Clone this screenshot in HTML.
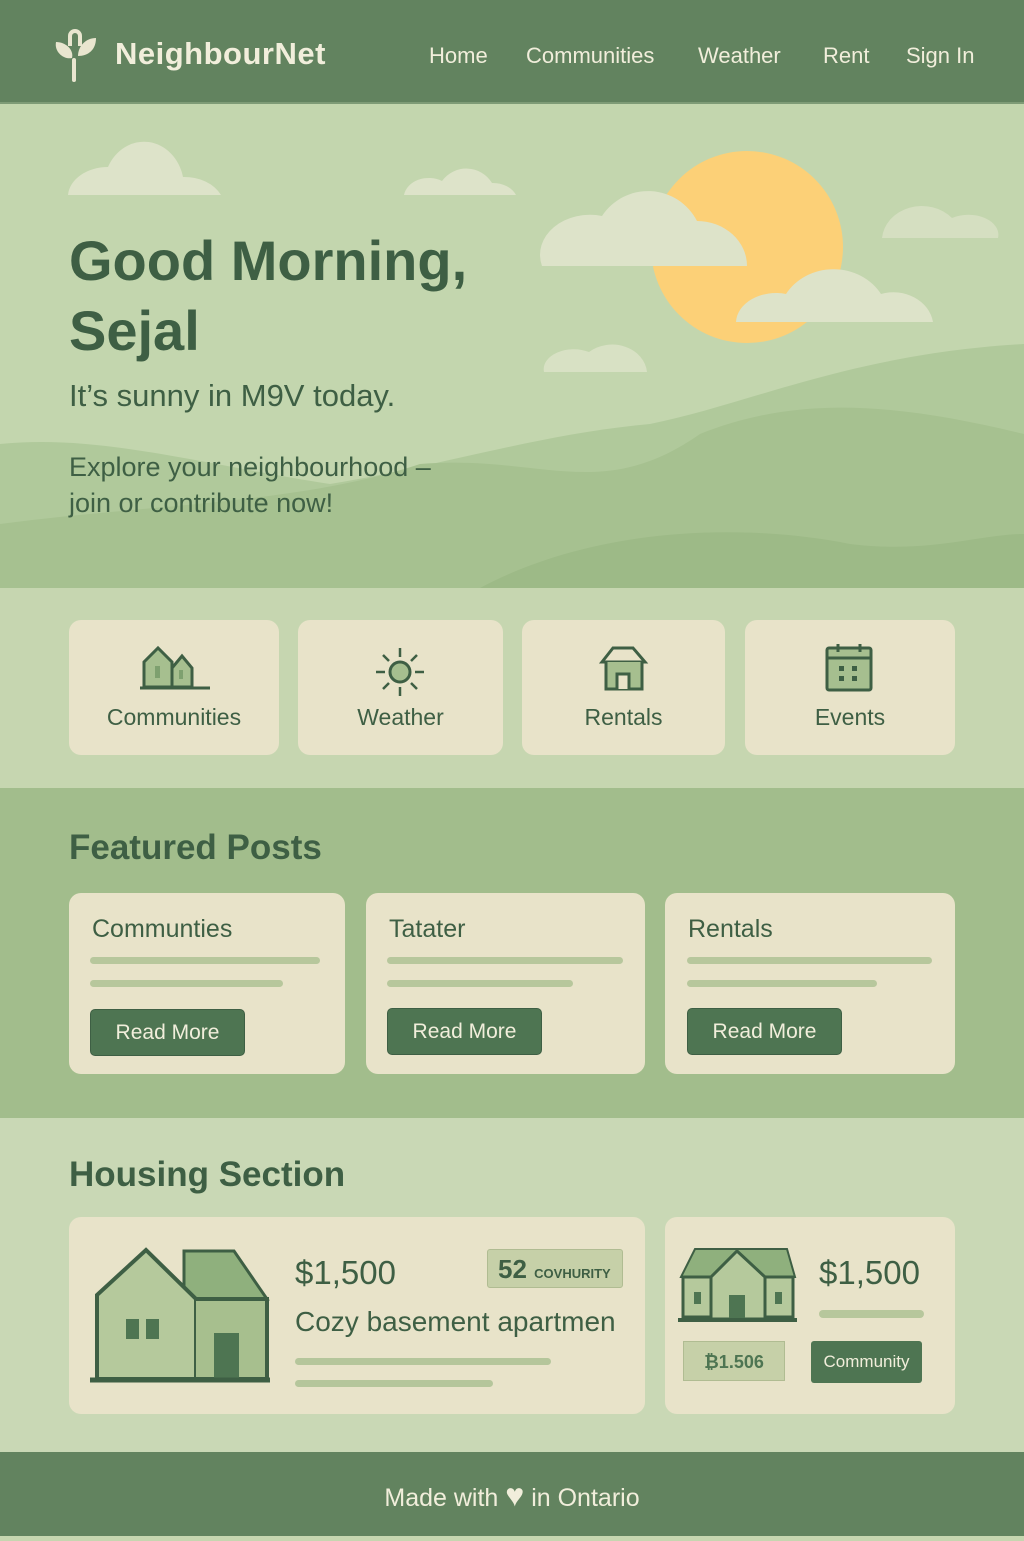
<!DOCTYPE html>
<html><head><meta charset="utf-8"><style>
*{margin:0;padding:0;box-sizing:border-box}
body{width:1024px;height:1536px;overflow:hidden;font-family:"Liberation Sans",sans-serif;background:#c6d6b0;color:#3e5f44;position:relative}
.abs{position:absolute}
header{position:absolute;left:0;top:0;width:1024px;height:104px;background:#62835f;border-bottom:2px solid #7e9b76}
.logo{position:absolute;left:115px;top:36px;font-size:31px;font-weight:bold;color:#f1eedb;letter-spacing:.5px}
nav a{position:absolute;top:43px;font-size:22px;color:#f1eedb;text-decoration:none}
.hero{position:absolute;left:0;top:104px;width:1024px;height:484px;background:#c3d6ae;overflow:hidden}
h1{position:absolute;left:69px;top:122px;font-size:56px;line-height:70px;color:#3e5f44;font-weight:bold}
.card{position:absolute;background:#e8e3c9;border-radius:12px}
.ic .lbl{position:absolute;left:0;right:0;top:84px;text-align:center;font-size:23px;color:#3e5f44}
.fp{font-size:25px;position:absolute;left:23px;top:22px}
.bar{position:absolute;height:7px;border-radius:4px;background:#b7c79c}
.btn{position:absolute;background:#4e7552;color:#f1eedb;border-radius:5px;font-size:21px;text-align:center;line-height:46px;width:155px;height:47px;border:1px solid #3e5f44}
h2{position:absolute;left:69px;font-size:35px;color:#3e5f44;font-weight:bold}
footer{position:absolute;left:0;top:1452px;width:1024px;height:84px;background:#62835f;color:#f1eedb;font-size:25px;text-align:center;line-height:86px}
</style></head><body>
<header>
<svg class="abs" style="left:52px;top:26px" width="48" height="56" viewBox="0 0 48 56"><path d="M18 20 V10 a5 5 0 0 1 10 0 V20" fill="none" stroke="#e9e6cf" stroke-width="4"/><path d="M22 54 V34" stroke="#e9e6cf" stroke-width="4" stroke-linecap="round"/><path d="M4 16 C14 16 22 24 20 32 C12 34 2 26 4 16Z" fill="#e9e6cf"/><path d="M44 12 C34 12 26 20 26 30 C36 30 44 24 44 12Z" fill="#e9e6cf"/></svg>
<div class="logo">NeighbourNet</div>
<nav><a style="left:429px">Home</a><a style="left:526px">Communities</a><a style="left:698px">Weather</a><a style="left:823px">Rent</a><a style="left:906px">Sign In</a></nav>
</header>
<div class="hero">
<svg class="abs" style="left:0;top:0" width="1024" height="484">
<circle cx="747" cy="143" r="96" fill="#fcd077"/>
<g fill="#dde3c9">
<path d="M68 91 a40 30 0 0 1 40 -28 a40 45 0 0 1 75 10 a40 30 0 0 1 38 18Z"/>
<path d="M404 91 a25 20 0 0 1 38 -14 a30 30 0 0 1 50 2 a25 20 0 0 1 24 12Z"/>
<path d="M542 162 a50 40 0 0 1 60 -50 a55 55 0 0 1 95 5 a50 45 0 0 1 50 45Z"/>
<path d="M736 218 a40 30 0 0 1 50 -28 a55 50 0 0 1 95 0 a40 35 0 0 1 52 28Z"/>
<path d="M544 268 a30 20 0 0 1 45 -20 a35 30 0 0 1 58 20Z" opacity=".8"/>
<path d="M882 134 a40 35 0 0 1 70 -20 a30 20 0 0 1 46 20Z" opacity=".7"/>
</g>
<path d="M0 340 C100 330 200 360 330 380 C450 360 540 330 650 320 C750 300 850 250 1024 240 V484 H0Z" fill="#b0c99b"/>
<path d="M0 420 C150 400 300 400 420 360 C540 350 600 400 700 330 C800 290 900 300 1024 330 V484 H0Z" fill="#a6c190"/>
<path d="M480 484 C600 420 750 420 850 440 C930 450 980 430 1024 430 V484Z" fill="#9dba87"/>
</svg>
<h1>Good Morning,<br>Sejal</h1>
<div class="abs" style="left:69px;top:274px;font-size:31px;color:#3e5f44">It’s sunny in M9V today.</div>
<div class="abs" style="left:69px;top:345px;font-size:27px;line-height:36px;color:#3e5f44">Explore your neighbourhood –<br>join or contribute now!</div>
</div>

<div class="card ic" style="left:69px;top:620px;width:210px;height:135px"><svg class="abs" style="left:69px;top:24px" width="74" height="46" viewBox="0 0 74 46"><path d="M6 43 V18 L20 4 L34 18 V43Z" fill="#a6bf8f" stroke="#3e5f44" stroke-width="3"/><path d="M34 43 V24 L44 12 L54 24 V43Z" fill="#a6bf8f" stroke="#3e5f44" stroke-width="3"/><rect x="17" y="22" width="5" height="12" fill="#7ea06f"/><rect x="41" y="26" width="4" height="9" fill="#7ea06f"/><path d="M2 44 H72" stroke="#3e5f44" stroke-width="3"/></svg><div class="lbl">Communities</div></div>
<div class="card ic" style="left:298px;top:620px;width:205px;height:135px"><svg class="abs" style="left:76px;top:26px" width="52" height="52" viewBox="0 0 52 52"><circle cx="26" cy="26" r="10" fill="#a6bf8f" stroke="#3e5f44" stroke-width="3"/><g stroke="#3e5f44" stroke-width="2.5"><path d="M26 2V11M26 41V50M2 26H11M41 26H50M9 9L15 15M37 37L43 43M43 9L37 15M15 37L9 43"/></g></svg><div class="lbl">Weather</div></div>
<div class="card ic" style="left:522px;top:620px;width:203px;height:135px"><svg class="abs" style="left:77px;top:24px" width="50" height="48" viewBox="0 0 50 48"><path d="M3 18 L14 4 H34 L46 18 Z" fill="#e8e3c9" stroke="#3e5f44" stroke-width="3"/><path d="M7 18 V45 H43 V18" fill="#a6bf8f" stroke="#3e5f44" stroke-width="3"/><path d="M18 45 V30 H30 V45" fill="#e8e3c9" stroke="#3e5f44" stroke-width="3"/></svg><div class="lbl">Rentals</div></div>
<div class="card ic" style="left:745px;top:620px;width:210px;height:135px"><svg class="abs" style="left:80px;top:22px" width="48" height="50" viewBox="0 0 48 50"><rect x="2" y="6" width="44" height="42" rx="2" fill="#a6bf8f" stroke="#3e5f44" stroke-width="3"/><path d="M2 16 H46" stroke="#3e5f44" stroke-width="3"/><path d="M13 2V10M35 2V10" stroke="#3e5f44" stroke-width="3"/><g fill="#3e5f44"><rect x="14" y="24" width="5" height="5"/><rect x="27" y="24" width="5" height="5"/><rect x="14" y="34" width="5" height="5"/><rect x="27" y="34" width="5" height="5"/></g></svg><div class="lbl">Events</div></div>

<div class="abs" style="left:0;top:788px;width:1024px;height:330px;background:#a2bd8c"></div>
<h2 style="top:828px">Featured Posts</h2>
<div class="card" style="left:69px;top:893px;width:276px;height:181px"><div class="fp">Communties</div><div class="bar" style="left:21px;top:64px;width:230px"></div><div class="bar" style="left:21px;top:87px;width:193px"></div><div class="btn" style="left:21px;top:116px">Read More</div></div>
<div class="card" style="left:366px;top:893px;width:279px;height:181px"><div class="fp">Tatater</div><div class="bar" style="left:21px;top:64px;width:236px"></div><div class="bar" style="left:21px;top:87px;width:186px"></div><div class="btn" style="left:21px;top:115px">Read More</div></div>
<div class="card" style="left:665px;top:893px;width:290px;height:181px"><div class="fp">Rentals</div><div class="bar" style="left:22px;top:64px;width:245px"></div><div class="bar" style="left:22px;top:87px;width:190px"></div><div class="btn" style="left:22px;top:115px">Read More</div></div>

<div class="abs" style="left:0;top:1118px;width:1024px;height:334px;background:#c9d8b5"></div>
<h2 style="top:1155px">Housing Section</h2>
<div class="card" style="left:69px;top:1217px;width:576px;height:197px">
<svg class="abs" style="left:20px;top:30px" width="182" height="136" viewBox="0 0 182 136"><path d="M95 4 H145 L178 52 H95Z" fill="#8fb07d" stroke="#3e5f44" stroke-width="3"/><path d="M8 132 V48 L57 3 L107 52 V132Z" fill="#b5c99c" stroke="#3e5f44" stroke-width="4"/><path d="M107 52 H178 V132 H107" fill="#a7bf8e" stroke="#3e5f44" stroke-width="4"/><rect x="37" y="72" width="13" height="20" fill="#4e7552"/><rect x="57" y="72" width="13" height="20" fill="#4e7552"/><rect x="125" y="86" width="25" height="46" fill="#4e7552"/><path d="M1 133 H181" stroke="#3e5f44" stroke-width="5"/></svg>
<div class="abs" style="left:226px;top:37px;font-size:33px">$1,500</div>
<div class="abs" style="left:418px;top:32px;width:136px;height:39px;background:#c6d0a8;border:1px solid #b0bc92;border-radius:3px;font-size:26px;line-height:38px;padding-left:10px;font-weight:bold">52 <span style="font-size:13px">COVHURITY</span></div>
<div class="abs" style="left:226px;top:89px;font-size:28px">Cozy basement apartmen</div>
<div class="bar" style="left:226px;top:141px;width:256px;background:#b5c69b"></div>
<div class="bar" style="left:226px;top:163px;width:198px;background:#b5c69b"></div>
</div>
<div class="card" style="left:665px;top:1217px;width:290px;height:197px">
<svg class="abs" style="left:12px;top:30px" width="122" height="76" viewBox="0 0 122 76"><path d="M4 30 L18 2 H110 L118 30Z" fill="#8fb07d" stroke="#3e5f44" stroke-width="2"/><rect x="6" y="30" width="28" height="40" fill="#b5c99c" stroke="#3e5f44" stroke-width="3"/><rect x="88" y="30" width="28" height="40" fill="#b5c99c" stroke="#3e5f44" stroke-width="3"/><path d="M34 72 V30 L60 4 L88 30 V72Z" fill="#b5c99c" stroke="#3e5f44" stroke-width="3"/><rect x="17" y="45" width="7" height="12" fill="#4e7552"/><rect x="98" y="45" width="7" height="12" fill="#4e7552"/><rect x="52" y="48" width="16" height="24" fill="#4e7552"/><path d="M1 73 H120" stroke="#3e5f44" stroke-width="4"/></svg>
<div class="abs" style="left:154px;top:37px;font-size:33px">$1,500</div>
<div class="bar" style="left:154px;top:93px;width:105px;height:8px"></div>
<div class="abs" style="left:18px;top:124px;width:102px;height:40px;background:#c6d0a8;border:1px solid #b0bc92;font-size:18px;line-height:40px;text-align:center;font-weight:bold;color:#4e7552">₿1.506</div>
<div class="abs" style="left:146px;top:124px;width:111px;height:42px;background:#4e7552;border-radius:3px;color:#f1eedb;font-size:17px;line-height:42px;text-align:center">Community</div>
</div>

<footer>Made with <span style="font-size:32px">♥</span> in Ontario</footer>
</body></html>
